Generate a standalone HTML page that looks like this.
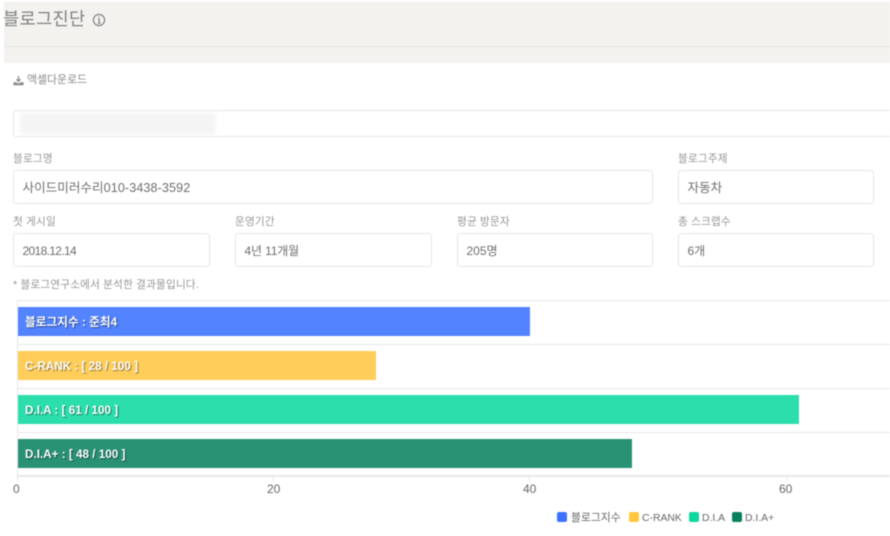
<!DOCTYPE html>
<html lang="ko">
<head>
<meta charset="utf-8">
<style>
html,body{margin:0;padding:0;background:#fff}
body{width:890px;height:536px;overflow:hidden;position:relative;font-family:"Liberation Sans","Noto Sans CJK KR",sans-serif}
#w{position:absolute;left:0;top:0;width:890px;height:536px;overflow:hidden;filter:blur(.45px)}
#w div{position:absolute;box-sizing:border-box;white-space:nowrap}
.lb{font-size:10.6px;color:#969696;line-height:12px;letter-spacing:.2px}
.f{background:#fff;border:1px solid #e6e6e6;border-radius:3px;font-size:12px;color:#6e6e6e;line-height:31px;padding-left:8.5px}
.bar{left:18px;height:29px;color:#fff;font-weight:bold;font-size:11.7px;line-height:31px;padding-left:7px;text-shadow:1px 1px 1px rgba(0,0,0,.45)}
.gl{left:17px;width:873px;height:1px;background:#e8e8e8}
.tk{top:476px;width:1px;height:5px;background:#e8e8e8}
.ax{top:483px;font-size:12px;color:#666;line-height:13px}
.sw{top:512px;width:10px;height:10px;border-radius:2px}
.lg{top:512px;font-size:10.4px;color:#666;line-height:13px}
</style>
</head>
<body>
<div id="w">
<div style="left:4px;top:2px;width:886px;height:61px;background:#f3f2ef"></div>
<div style="left:4px;top:46px;width:886px;height:1px;background:#e6e5e2"></div>
<div style="left:3px;top:9px;font-size:17.6px;line-height:21px;color:#808080;letter-spacing:.3px">블로그진단</div>
<svg style="position:absolute;left:91.5px;top:13px" width="14" height="14" viewBox="0 0 13 13"><circle cx="6.5" cy="6.5" r="5.2" fill="none" stroke="#777" stroke-width="1"/><path d="M6.5 3.4v1.2M5.5 6h1.2v3.4M5.3 9.4h2.6" fill="none" stroke="#777" stroke-width="1"/></svg>

<svg style="position:absolute;left:13px;top:75px" width="11" height="11" viewBox="0 0 11 11"><path d="M5.5 1v5M3.4 4.2l2.1 2.2 2.1-2.2" fill="none" stroke="#888" stroke-width="1.2"/><path d="M.5 7.2h3l1 1h2l1-1h3v3H.5z" fill="#888"/></svg>
<div style="left:27px;top:74px;font-size:10.9px;line-height:13px;color:#888">액셀다운로드</div>

<div class="f" style="left:13px;top:110px;width:890px;height:27px"></div>
<div style="left:20px;top:113px;width:195px;height:21px;background:#f4f4f4;filter:blur(2px)"></div>

<div class="lb" style="left:13px;top:153px">블로그명</div>
<div class="f" style="left:13px;top:170px;width:640px;height:34px;line-height:35px;font-size:12.6px">사이드미러수리<span style="letter-spacing:.1px">010-3438-3592</span></div>
<div class="lb" style="left:678px;top:153px">블로그주제</div>
<div class="f" style="left:678px;top:170px;width:196px;height:34px;line-height:35px;font-size:12.6px">자동차</div>

<div class="lb" style="left:13px;top:216px">첫 게시일</div>
<div class="f" style="left:13px;top:233px;width:197px;height:34px;line-height:35px;letter-spacing:-.65px">2018.12.14</div>
<div class="lb" style="left:235px;top:216px">운영기간</div>
<div class="f" style="left:235px;top:233px;width:197px;height:34px;line-height:35px;letter-spacing:-.15px">4년 11개월</div>
<div class="lb" style="left:457px;top:216px">평균 방문자</div>
<div class="f" style="left:457px;top:233px;width:196px;height:34px;line-height:35px">205명</div>
<div class="lb" style="left:678px;top:216px">총 스크랩수</div>
<div class="f" style="left:678px;top:233px;width:196px;height:34px;line-height:35px">6개</div>

<div class="lb" style="left:13px;top:279px">* 블로그연구소에서 분석한 결과물입니다.</div>

<div class="gl" style="top:300px"></div>
<div class="gl" style="top:344px"></div>
<div class="gl" style="top:388px"></div>
<div class="gl" style="top:432px"></div>
<div class="gl" style="top:475px;height:2px"></div>
<div style="left:17px;top:300px;width:1px;height:181px;background:#e8e8e8"></div>
<div class="tk" style="left:273px"></div>
<div class="tk" style="left:529px"></div>
<div class="tk" style="left:786px"></div>

<div class="bar" style="top:307px;width:512px;background:#5383ff">블로그지수 : 준최4</div>
<div class="bar" style="top:351px;width:358px;background:#ffce5a">C-RANK : [ 28 / 100 ]</div>
<div class="bar" style="top:395px;width:781px;background:#2bdeac">D.I.A : [ 61 / 100 ]</div>
<div class="bar" style="top:439px;width:614px;background:#299174">D.I.A+ : [ 48 / 100 ]</div>

<div class="ax" style="left:13px">0</div>
<div class="ax" style="left:267px">20</div>
<div class="ax" style="left:523px">40</div>
<div class="ax" style="left:779px">60</div>

<div class="sw" style="left:557px;background:#3b72ff"></div>
<div class="lg" style="left:571px;font-size:10.8px">블로그지수</div>
<div class="sw" style="left:629px;background:#ffc83c"></div>
<div class="lg" style="left:642px">C-RANK</div>
<div class="sw" style="left:689px;background:#0fd6a0"></div>
<div class="lg" style="left:702px">D.I.A</div>
<div class="sw" style="left:732px;background:#087f5f"></div>
<div class="lg" style="left:745px">D.I.A+</div>
</div>
</body>
</html>
